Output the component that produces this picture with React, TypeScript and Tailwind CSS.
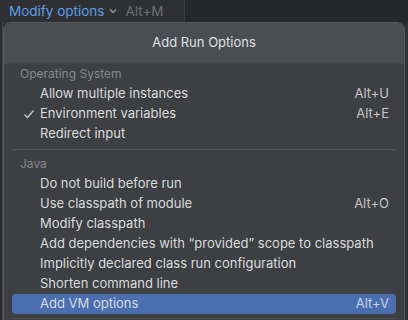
import React from "react";

type Item = { label: string; shortcut?: string; checked?: boolean; selected?: boolean };

const sections: { title: string; items: Item[] }[] = [
  {
    title: "Operating System",
    items: [
      { label: "Allow multiple instances", shortcut: "Alt+U" },
      { label: "Environment variables", shortcut: "Alt+E", checked: true },
      { label: "Redirect input" },
    ],
  },
  {
    title: "Java",
    items: [
      { label: "Do not build before run" },
      { label: "Use classpath of module", shortcut: "Alt+O" },
      { label: "Modify classpath" },
      { label: "Add dependencies with \u201cprovided\u201d scope to classpath" },
      { label: "Implicitly declared class run configuration" },
      { label: "Shorten command line" },
      { label: "Add VM options", shortcut: "Alt+V", selected: true },
    ],
  },
];

function Row({ item }: { item: Item }) {
  return (
    <div
      className={`mx-[8px] flex h-[20px] items-center rounded-[4px] pr-[7px] ${
        item.selected ? "bg-[#4a6eb0]" : ""
      }`}
    >
      <div className="flex w-[28px] justify-center pl-[6px] text-[#c9ccd1]">
        {item.checked && (
          <svg width="12" height="12" viewBox="0 0 12 12" fill="none">
            <path d="M1.5 6.5 4.5 9.5 10.5 2.5" stroke="currentColor" strokeWidth="1.3" />
          </svg>
        )}
      </div>
      <span className="flex-1 text-[#dadcdf]">{item.label}</span>
      {item.shortcut && (
        <span className={item.selected ? "text-[#c8d3e8]" : "text-[#c4c6ca]"}>{item.shortcut}</span>
      )}
    </div>
  );
}

export default function App() {
  return (
    <div
      className="relative h-[320px] w-[408px] overflow-hidden bg-[#2e3033] text-[13px]"
      style={{ fontFamily: "Inter, 'Noto Sans', sans-serif" }}
    >
      <div className="flex h-[22px]">
        <div className="flex w-[184px] items-center pl-[9px]">
          <span className="text-[13.5px] text-[#5d9ee8]">Modify options</span>
          <svg className="ml-[4px] text-[#a0a3a8]" width="10" height="10" viewBox="0 0 10 10" fill="none">
            <path d="M2 3.5 5 6.5 8 3.5" stroke="currentColor" strokeWidth="1.2" />
          </svg>
          <span className="ml-[7px] text-[13.5px] text-[#6c6f74]">Alt+M</span>
        </div>
        <div className="flex-1 border-l border-[#3a3c3f] bg-[#26272a]" />
      </div>

      <div className="absolute left-0 top-[22px] h-[298px] w-[3px] border-r border-[#45474a] bg-[#2b2d30]" />

      <div className="absolute left-[3px] top-[22px] h-[310px] w-[402px] overflow-hidden rounded-[8px] border border-[#56595c] bg-[#3d3f42]">
        <div className="flex h-[41px] items-center justify-center border-b border-[#45474a] bg-[#4b4e51] text-[13px] text-[#dfe1e5]">
          Add Run Options
        </div>
        {sections.map((section, i) => (
          <div key={section.title}>
            {i > 0 && <div className="mx-[8px] my-[4.5px] h-px bg-[#515357]" />}
            <div className="flex h-[20px] items-center pl-[16px] text-[12px] text-[#878a8f]">{section.title}</div>
            {section.items.map(item => (
              <Row key={item.label} item={item} />
            ))}
          </div>
        ))}
        <div className="mx-[8px] mt-[3.5px] h-px bg-[#515357]" />
      </div>
    </div>
  );
}
